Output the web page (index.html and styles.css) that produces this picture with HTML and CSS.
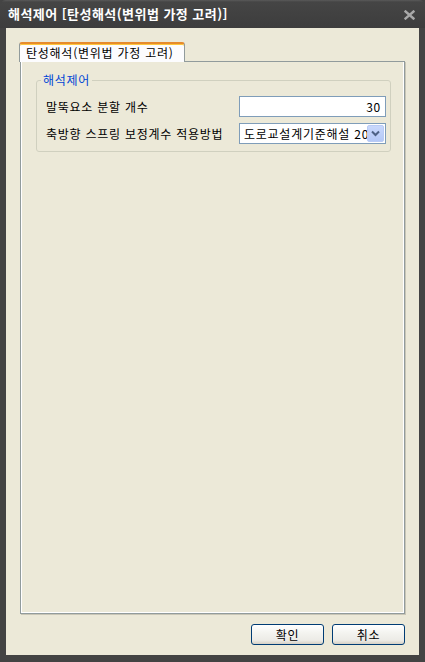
FILE: index.html
```html
<!DOCTYPE html>
<html lang="ko">
<head>
<meta charset="utf-8">
<title>해석제어</title>
<link rel="stylesheet" href="styles.css">
</head>
<body>
<div class="window">
  <div class="titlebar">
    <span class="title">해석제어 [탄성해석(변위법 가정 고려)]</span>
    <svg class="close" width="11" height="10" viewBox="0 0 11 10"><path d="M1.5 1.5 L9.5 8.5 M9.5 1.5 L1.5 8.5" stroke="#a8a8a8" stroke-width="2.4" stroke-linecap="square" fill="none"/></svg>
  </div>
  <div class="client">
    <div class="tabstrip"><div class="tab">탄성해석(변위법 가정 고려)</div></div>
    <div class="panel">
      <fieldset class="group">
        <legend>해석제어</legend>
        <div class="rows">
          <div class="row">
            <span class="label">말뚝요소 분할 개수</span>
            <div class="textbox">30</div>
          </div>
          <div class="row">
            <span class="label">축방향 스프링 보정계수 적용방법</span>
            <div class="combo">
              <span class="combo-text">도로교설계기준해설 2007</span>
              <span class="combo-btn"><svg width="9" height="7" viewBox="0 0 9 7"><path d="M1 1.5 L4.5 5 L8 1.5" stroke="#4d6185" stroke-width="2" fill="none"/></svg></span>
            </div>
          </div>
        </div>
      </fieldset>
    </div>
    <div class="footer">
      <button class="btn">확인</button>
      <button class="btn">취소</button>
    </div>
  </div>
</div>
</body>
</html>
```

FILE: styles.css
```css
html, body {
  margin: 0;
  padding: 0;
}
body {
  background: #444444;
  font-family: "Noto Sans CJK KR", "Noto Sans", sans-serif;
  font-size: 12px;
  letter-spacing: 0.75px;
  color: #000;
}
.window {
  width: 425px;
  height: 662px;
  display: flex;
  flex-direction: column;
  background: #434343;
  border-radius: 6px 6px 0 0;
  overflow: hidden;
  box-sizing: border-box;
}
.titlebar {
  height: 28px;
  flex: none;
  display: flex;
  align-items: center;
  justify-content: space-between;
  padding: 0 10px 0 8px;
  background: linear-gradient(#5a5a5a 0, #454545 2px, #3d3d3d 100%);
  color: #ffffff;
}
.title {
  font-size: 13px;
  font-weight: bold;
  line-height: 16px;
  letter-spacing: 0.45px;
}
.close {
  display: block;
  margin-top: 1px;
}
.client {
  flex: 1;
  margin: 0 6px 7px 6px;
  background: #ece9d8;
  padding: 14px 14px 0 14px;
  display: flex;
  flex-direction: column;
  min-height: 0;
}
.tabstrip {
  height: 19px;
  flex: none;
  display: flex;
}
.tab {
  position: relative;
  z-index: 1;
  margin-left: -1px;
  width: 166px;
  height: 20px;
  box-sizing: border-box;
  background: #fcfcfe;
  border: 1px solid #919b9c;
  border-bottom: none;
  border-top: 2px solid #e68b2c;
  box-shadow: inset 0 1px 0 #ffc73c;
  border-radius: 3px 3px 0 0;
  padding: 1px 0 0 6px;
  line-height: 15px;
  font-size: 12px;
  white-space: nowrap;
}
.panel {
  flex: 1;
  border: 1px solid #919b9c;
  background: #ece9d8;
  box-shadow: inset 1px 0 0 #ffffff, inset -1px 0 0 #ffffff, inset 0 -1px 0 #ffffff, 1px 1px 0 #c9c6b6;
  padding: 11px 13px 0 15px;
  min-height: 0;
}
.group {
  margin: 0;
  padding: 9px 4px 7px 9px;
  border: 1px solid #d0d0bf;
  border-radius: 3px;
  min-width: 0;
}
.group legend {
  color: #0046d5;
  font-size: 12px;
  line-height: 14px;
  padding: 0 2px;
  margin-left: -5px;
}
.rows {
  display: flex;
  flex-direction: column;
  gap: 6px;
}
.row {
  display: grid;
  grid-template-columns: 1fr 147px;
  align-items: center;
  height: 21px;
}
.label {
  white-space: nowrap;
  line-height: 14px;
}
.textbox {
  height: 21px;
  box-sizing: border-box;
  border: 1px solid #7f9db9;
  background: #ffffff;
  text-align: right;
  padding-right: 4px;
  line-height: 19px;
}
.combo {
  height: 21px;
  box-sizing: border-box;
  border: 1px solid #7f9db9;
  background: #ffffff;
  display: flex;
  align-items: center;
  padding: 1px;
}
.combo-text {
  flex: 1;
  min-width: 0;
  overflow: hidden;
  white-space: nowrap;
  padding-left: 3px;
  line-height: 17px;
}
.combo-btn {
  width: 17px;
  height: 17px;
  box-sizing: border-box;
  flex: none;
  background: linear-gradient(#c9d8fc, #b4c8f6);
  border: 1px solid #b9cbf5;
  border-radius: 2px;
  display: flex;
  align-items: center;
  justify-content: center;
}
.combo-btn svg {
  display: block;
}
.footer {
  height: 41px;
  flex: none;
  display: flex;
  justify-content: flex-end;
  align-items: flex-start;
  padding-top: 10px;
  box-sizing: border-box;
  gap: 8px;
}
.btn {
  width: 73px;
  height: 21px;
  box-sizing: border-box;
  border: 1px solid #003c74;
  border-radius: 3px;
  background: linear-gradient(#ffffff 0%, #f4f4f0 40%, #ecebe6 80%, #d6d0c5 100%);
  font-family: "Noto Sans CJK KR", "Noto Sans", sans-serif;
  font-size: 12px;
  letter-spacing: 0.75px;
  color: #000;
  padding: 0;
  line-height: 18px;
}
```
